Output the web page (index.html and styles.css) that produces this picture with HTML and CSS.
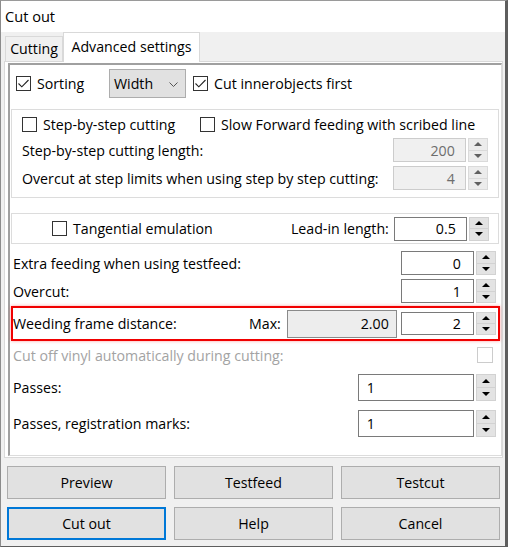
FILE: index.html
```html
<!DOCTYPE html>
<html>
<head>
<meta charset="utf-8">
<link rel="stylesheet" href="styles.css">
</head>
<body>
<div class="window">
  <div class="titlebar">Cut out</div>
  <div class="tabstrip">
    <div class="tab">Cutting</div>
    <div class="tab active">Advanced settings</div>
  </div>
  <div class="panel">
    <div class="frame">
      <div class="row-sort">
        <label class="cbw sort-label"><span class="cb"><svg width="15" height="15" viewBox="0 0 15 15"><path d="M2.5 7.5 L5.8 10.8 L12.5 4" fill="none" stroke="#222" stroke-width="1.1"/></svg></span>Sorting</label>
        <div class="combo">Width<svg class="chev" width="9" height="5" viewBox="0 0 9 5"><path d="M0.5 0.5 L4.5 4.5 L8.5 0.5" fill="none" stroke="#555" stroke-width="1"/></svg></div>
        <label class="cbw inner-cb"><span class="cb"><svg width="15" height="15" viewBox="0 0 15 15"><path d="M2.5 7.5 L5.8 10.8 L12.5 4" fill="none" stroke="#222" stroke-width="1.1"/></svg></span>Cut innerobjects first</label>
      </div>

      <div class="group group1">
        <div class="g-row rowA">
          <label class="cbw step-cb"><span class="cb"></span>Step-by-step cutting</label>
          <label class="cbw"><span class="cb"></span>Slow Forward feeding with scribed line</label>
        </div>
        <div class="g-row rowB">
          <span class="lbl">Step-by-step cutting length:</span>
          <div class="spin disabled"><div class="field">200</div><div class="arrows"><div class="up"></div><div class="down"></div></div></div>
        </div>
        <div class="g-row rowC">
          <span class="lbl">Overcut at step limits when using step by step cutting:</span>
          <div class="spin disabled"><div class="field">4</div><div class="arrows"><div class="up"></div><div class="down"></div></div></div>
        </div>
      </div>

      <div class="group group2">
        <label class="cbw"><span class="cb"></span>Tangential emulation</label>
        <span class="lead">Lead-in length:</span>
        <div class="spin"><div class="field">0.5</div><div class="arrows"><div class="up"></div><div class="down"></div></div></div>
      </div>

      <div class="f-row extra">
        <span class="lbl">Extra feeding when using testfeed:</span>
        <div class="spin"><div class="field">0</div><div class="arrows"><div class="up"></div><div class="down"></div></div></div>
      </div>
      <div class="f-row overcut">
        <span class="lbl">Overcut:</span>
        <div class="spin"><div class="field">1</div><div class="arrows"><div class="up"></div><div class="down"></div></div></div>
      </div>

      <div class="weed">
        <span class="lbl weed-lbl">Weeding frame distance:</span>
        <span class="max">Max:</span>
        <div class="ro-field">2.00</div>
        <div class="spin short"><div class="field">2</div><div class="arrows"><div class="up"></div><div class="down"></div></div></div>
      </div>

      <div class="f-row vinyl">
        <span class="lbl dis">Cut off vinyl automatically during cutting:</span>
        <span class="cb dis-cb"></span>
      </div>

      <div class="f-row passes">
        <span class="lbl">Passes:</span>
        <div class="spin wide"><div class="field">1</div><div class="arrows"><div class="up"></div><div class="down"></div></div></div>
      </div>
      <div class="f-row passes reg">
        <span class="lbl">Passes, registration marks:</span>
        <div class="spin wide"><div class="field">1</div><div class="arrows"><div class="up"></div><div class="down"></div></div></div>
      </div>
    </div>
  </div>
  <div class="buttons">
    <div class="btn">Preview</div>
    <div class="btn">Testfeed</div>
    <div class="btn">Testcut</div>
    <div class="btn default">Cut out</div>
    <div class="btn">Help</div>
    <div class="btn">Cancel</div>
  </div>
</div>
</body>
</html>
```

FILE: styles.css
```css
* { box-sizing: border-box; }
html, body { margin: 0; padding: 0; }
body {
  width: 508px;
  height: 547px;
  overflow: hidden;
  background: #fff;
  font-family: "Open Sans", "Noto Sans", sans-serif;
  font-size: 14.2px;
  color: #000;
}
.window {
  width: 508px;
  height: 547px;
  background: #f0f0f0;
  border-left: 1px solid #8c8c8c;
  border-top: 1px solid #9a9a9a;
  border-right: 3px solid #5e5e5e;
  border-bottom: 1px solid #5e5e5e;
  display: flex;
  flex-direction: column;
}
.titlebar {
  height: 31px;
  flex: none;
  background: #fff;
  padding-left: 4px;
  display: flex;
  align-items: center;
  line-height: 1;
  font-size: 14.6px;
}
.tabstrip {
  height: 29px;
  flex: none;
  display: flex;
  align-items: flex-end;
  padding-left: 4px;
}
.tab {
  height: 25px;
  width: 58px;
  border: 1px solid #d9d9d9;
  border-bottom: none;
  background: #f0f0f0;
  display: flex;
  align-items: center;
  justify-content: center;
  padding-bottom: 1px;
}
.tab.active {
  width: 137px;
  height: 30px;
  margin-bottom: -1px;
  background: #fff;
  position: relative;
  z-index: 1;
  padding-bottom: 2px;
}
.panel {
  height: 397px;
  flex: none;
  margin: 0 2px 0 3px;
  background: #fff;
  border: 1px solid #d9d9d9;
  padding: 1px 2px 1px 3px;
  display: flex;
}
.frame {
  flex: 1;
  border-top: 2px solid #a0a0a0;
  border-left: 2px solid #a0a0a0;
  border-right: 1px solid #dcdcdc;
  border-bottom: 1px solid #dcdcdc;
  display: flex;
  flex-direction: column;
}
.cbw {
  display: flex;
  align-items: center;
  gap: 6px;
  white-space: nowrap;
}
.cb {
  width: 15px;
  height: 15px;
  border: 1px solid #333;
  background: #fff;
  flex: none;
  position: relative;
}
.cb svg { position: absolute; left: -1px; top: -1px; }
.row-sort {
  display: flex;
  align-items: center;
  margin-top: 4px;
  height: 29px;
  padding-left: 6px;
}
.sort-label { width: 93px; }
.combo {
  width: 77px;
  height: 29px;
  background: #e1e1e1;
  border: 1px solid #adadad;
  display: flex;
  align-items: center;
  padding-left: 4px;
  position: relative;
}
.chev { position: absolute; left: 59px; top: 12px; }
.inner-cb { margin-left: 7px; }

.group {
  border: 1px solid #dcdcdc;
  margin: 0 2px 0 1px;
}
.group1 {
  margin-top: 11px;
  padding: 2px 10px 7px 10px;
}
.g-row { display: flex; align-items: center; justify-content: space-between; }
.rowA { height: 25px; justify-content: flex-start; }
.step-cb { width: 178px; }
.rowB { margin-top: 1px; height: 24px; }
.rowC { margin-top: 4px; height: 24px; }

.group2 {
  margin-top: 15px;
  height: 31px;
  display: flex;
  align-items: center;
  padding: 0 9px 0 40px;
}
.lead { margin-left: auto; margin-right: 5px; }

.spin {
  display: flex;
  gap: 2px;
  height: 24px;
  flex: none;
}
.field {
  width: 73px;
  height: 100%;
  border: 1px solid #7a7a7a;
  background: #fff;
  display: flex;
  align-items: center;
  justify-content: flex-end;
  padding-right: 10px;
}
.arrows {
  width: 20px;
  display: flex;
  flex-direction: column;
}
.up, .down {
  flex: 1;
  background: #e3e3e3;
  border: 1px solid #d2d2d2;
  display: flex;
  align-items: center;
  justify-content: center;
}
.down { border-top: none; }
.up::after, .down::after {
  content: "";
  width: 0;
  height: 0;
  border-left: 4px solid transparent;
  border-right: 4px solid transparent;
}
.up::after { border-bottom: 4px solid #000; }
.down::after { border-top: 4px solid #000; }
.spin.disabled .field {
  background: #f0f0f0;
  border-color: #cccccc;
  color: #6d6d6d;
}
.spin.disabled .up, .spin.disabled .down {
  background: #ececec;
  border-color: #dadada;
}
.spin.disabled .up::after { border-bottom-color: #606060; }
.spin.disabled .down::after { border-top-color: #606060; }

.f-row {
  display: flex;
  align-items: center;
  justify-content: space-between;
  padding-left: 3px;
  margin-right: 5px;
  height: 24px;
}
.extra { margin-top: 7px; }
.overcut { margin-top: 4px; }
.extra .field, .overcut .field { padding-right: 12px; }

.weed {
  margin: 3px 1px 0 1px;
  height: 35px;
  border: 2px solid #f00000;
  box-shadow: 0 0 3px rgba(255, 40, 40, 0.45);
  display: flex;
  align-items: center;
  padding-right: 2px;
}
.weed-lbl { width: 236px; }
.max { margin-right: 6px; }
.ro-field {
  width: 110px;
  height: 28px;
  background: #ededed;
  border: 1px solid #8a8a8a;
  display: flex;
  align-items: center;
  justify-content: flex-end;
  padding-right: 7px;
  margin-right: 4px;
}
.spin.short { height: 23px; }
.spin.short .field { padding-right: 12px; }

.vinyl { margin-top: 3px; height: 22px; }
.dis { color: #a3a3a3; }
.dis-cb {
  width: 16px;
  height: 16px;
  border-color: #cccccc;
  margin-right: 3px;
}
.passes { margin-top: 8px; height: 27px; }
.passes.reg { margin-top: 9px; }
.spin.wide { height: 27px; }
.spin.wide .field {
  width: 116px;
  justify-content: flex-start;
  padding-left: 8px;
}

.buttons {
  margin-top: 8px;
  padding: 0 4px 0 6px;
  display: grid;
  grid-template-columns: repeat(3, 159px);
  grid-auto-rows: 33px;
  column-gap: 8px;
  row-gap: 8px;
}
.btn {
  background: #e1e1e1;
  border: 1px solid #adadad;
  display: flex;
  align-items: center;
  justify-content: center;
}
.btn.default { border: 2px solid #0078d7; }
```
